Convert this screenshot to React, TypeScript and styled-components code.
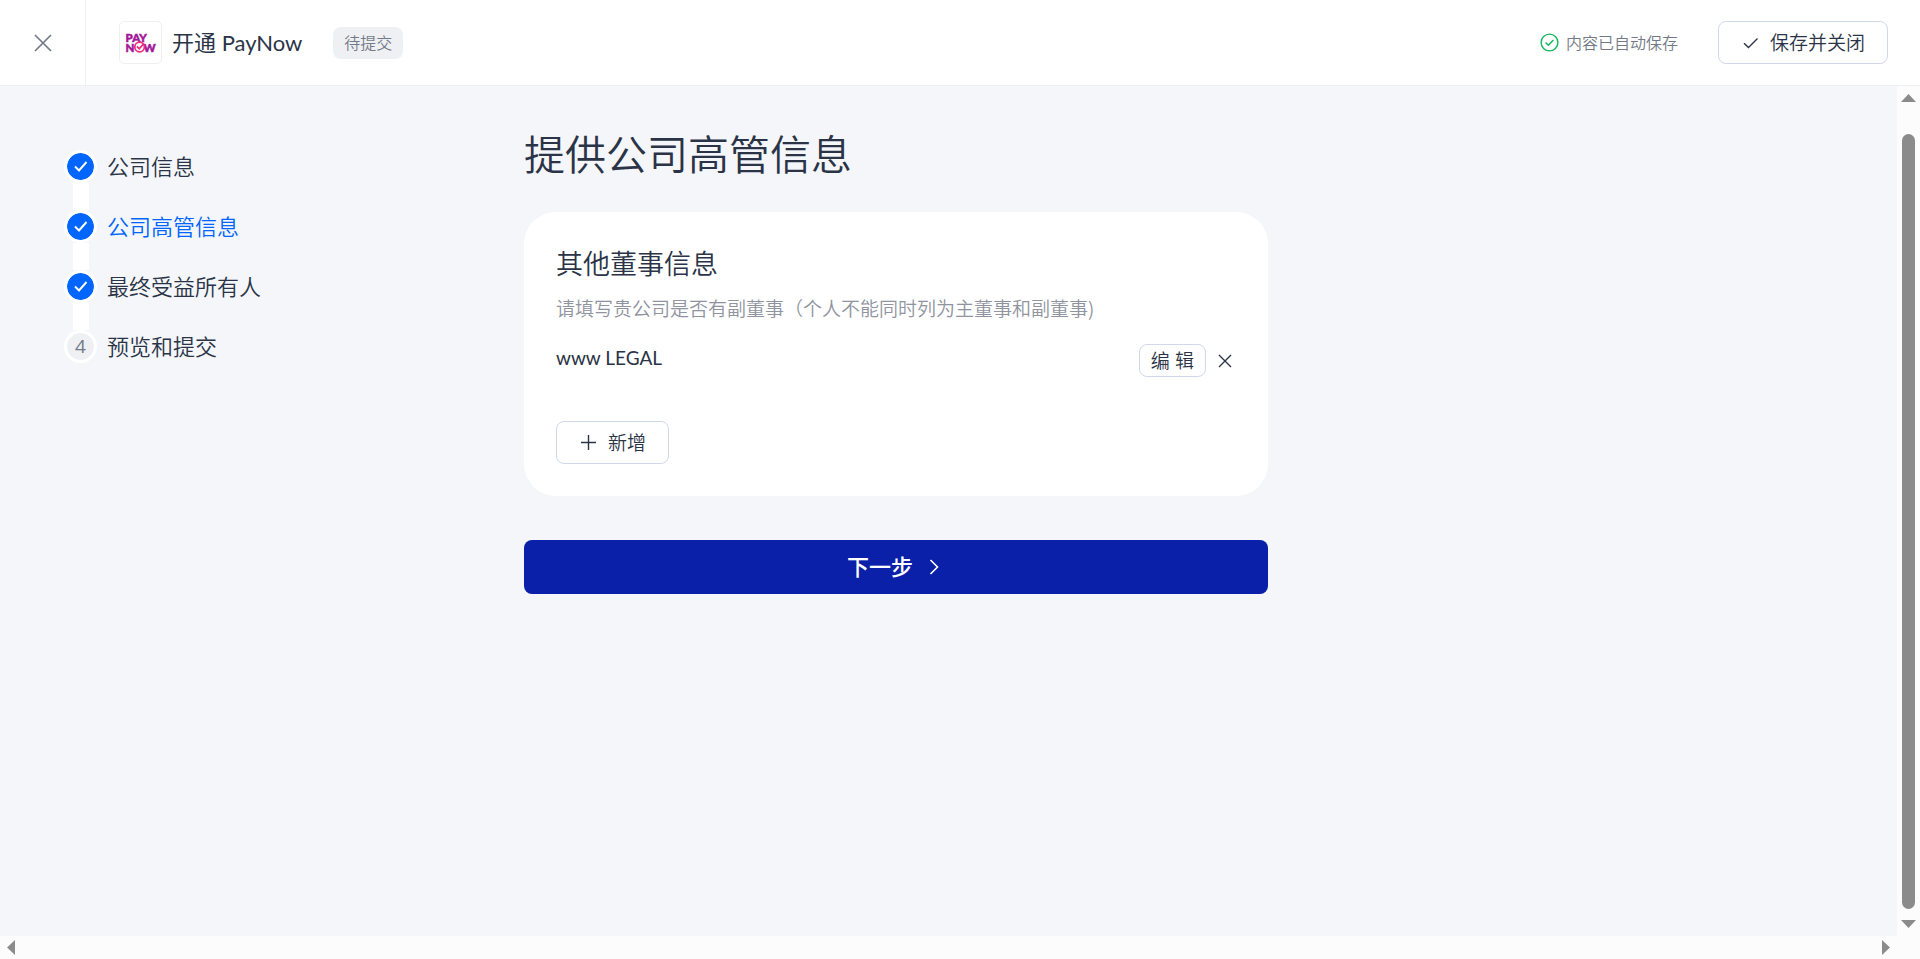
import React from "react";
import styled, { createGlobalStyle } from "styled-components";

const color = {
  ink: "#2a3446",
  muted: "#737a87",
  hint: "#9094a0",
  page: "#f4f6fa",
  line: "#eff0f4",
  border: "#d0d9e9",
  blue: "#0066ff",
  navy: "#0a20a9",
  green: "#12b85c",
  track: "#fcfcfc",
  thumb: "#8b8b8b",
};

const GlobalStyle = createGlobalStyle`
  *, *::before, *::after { box-sizing: border-box; }
  body {
    margin: 0;
    background: ${color.page};
    color: ${color.ink};
    font-family: Lato, "Noto Sans CJK SC", sans-serif;
    font-weight: 350;
  }
  button, a { font: inherit; color: inherit; }
  h1, h2, p, ol { margin: 0; padding: 0; font-weight: inherit; }
`;

const Page = styled.div`
  display: flex;
  flex-direction: column;
  height: 100vh;
`;

const Header = styled.header`
  display: flex;
  align-items: stretch;
  flex: none;
  height: 86px;
  background: #fff;
  border-bottom: 1px solid ${color.line};
`;

const CloseButton = styled.button`
  display: flex;
  align-items: center;
  justify-content: center;
  width: 86px;
  padding: 0;
  border: 0;
  border-right: 1px solid ${color.line};
  background: none;
  color: ${color.muted};
  cursor: pointer;
`;

const HeaderBar = styled.div`
  display: flex;
  flex: 1;
  align-items: center;
  padding: 0 32px 0 33px;
`;

const LogoBox = styled.span`
  display: flex;
  align-items: center;
  justify-content: center;
  width: 43px;
  height: 43px;
  border: 1px solid ${color.line};
  border-radius: 5px;
`;

const ProductName = styled.h1`
  margin-left: 10px;
  font-size: 22px;
  line-height: 32px;
  font-weight: 400;
`;

const Tag = styled.span`
  margin-left: 31px;
  padding: 0 11px;
  border-radius: 8px;
  background: ${color.line};
  color: ${color.muted};
  font-size: 16px;
  line-height: 32px;
`;

const SaveStatus = styled.p`
  display: flex;
  align-items: center;
  gap: 7px;
  margin: 0 40px 0 auto;
  color: ${color.muted};
  font-size: 16px;
  line-height: 24px;

  svg { color: ${color.green}; }
`;

const OutlineButton = styled.button<{ $small?: boolean }>`
  display: inline-flex;
  align-items: center;
  justify-content: center;
  gap: 10px;
  height: ${(p) => (p.$small ? 33 : 43)}px;
  padding: 0 ${(p) => (p.$small ? 11 : 22)}px;
  border: 1px solid ${color.border};
  border-radius: 8px;
  background: #fff;
  color: ${color.ink};
  font-size: 19px;
  line-height: 28px;
  white-space: pre;
  cursor: pointer;
`;

const Viewport = styled.div`
  display: grid;
  flex: 1;
  grid-template-columns: minmax(0, 1fr) 23px;
  grid-template-rows: minmax(0, 1fr) 23px;
  min-height: 0;
  background: ${color.track};
`;

const Content = styled.div`
  display: flex;
  align-items: flex-start;
  overflow: hidden;
  background: ${color.page};
`;

const Sidebar = styled.nav`
  flex: none;
  width: 524px;
  padding: 64px 0 0 64px;
`;

const StepList = styled.ol`
  list-style: none;
`;

const Step = styled.li`
  display: grid;
  grid-template-columns: 33px 1fr;
  column-gap: 10px;
`;

const StepMark = styled.span<{ $done?: boolean }>`
  display: flex;
  align-items: center;
  justify-content: center;
  width: 33px;
  height: 33px;
  border: 3px solid #fff;
  border-radius: 50%;
  background: ${(p) => (p.$done ? color.blue : color.line)};
  background-clip: padding-box;
  color: ${(p) => (p.$done ? "#fff" : color.muted)};
  font-family: "Open Sans", sans-serif;
  font-size: 19px;
  font-weight: 400;
  line-height: 27px;
`;

const StepLink = styled.a<{ $active?: boolean }>`
  color: ${(p) => (p.$active ? color.blue : color.ink)};
  font-size: 22px;
  line-height: 33px;
  text-decoration: none;
`;

const Connector = styled.span`
  justify-self: center;
  width: 16px;
  height: 27px;
  background: #fff;
`;

const Main = styled.main`
  flex: 0 1 744px;
  padding-top: 37px;
`;

const PageTitle = styled.h2`
  font-size: 41px;
  line-height: 64px;
`;

const Card = styled.section`
  margin-top: 25px;
  padding: 32px;
  border-radius: 32px;
  background: #fff;
`;

const CardTitle = styled.h2`
  font-size: 27px;
  line-height: 40px;
`;

const CardHint = styled.p`
  margin-top: 10px;
  color: ${color.hint};
  font-family: "Noto Sans CJK SC", sans-serif;
  font-size: 19px;
  line-height: 28px;
`;

const DirectorRow = styled.div`
  display: flex;
  align-items: center;
  gap: 8px;
  margin: 22px 0 44px;
`;

const DirectorName = styled.span`
  flex: 1;
  align-self: flex-start;
  font-weight: 400;
  font-size: 19px;
  line-height: 28px;
`;

const IconButton = styled.button`
  display: flex;
  align-items: center;
  justify-content: center;
  width: 22px;
  height: 22px;
  padding: 0;
  border: 0;
  background: none;
  cursor: pointer;
`;

const NextButton = styled.button`
  display: flex;
  align-items: center;
  justify-content: center;
  gap: 10px;
  width: 100%;
  height: 54px;
  margin-top: 44px;
  border: 0;
  border-radius: 8px;
  background: ${color.navy};
  color: #fff;
  font-size: 22px;
  font-weight: 500;
  line-height: 32px;
  cursor: pointer;
`;

const VerticalBar = styled.div`
  display: flex;
  flex-direction: column;
  align-items: center;
  padding: 8px 0;
`;

const Thumb = styled.span`
  flex: 1;
  width: 13px;
  margin: 32px 0 11px;
  border-radius: 7px;
  background: ${color.thumb};
`;

const HorizontalBar = styled.div`
  display: flex;
  align-items: center;
  justify-content: space-between;
  padding: 0 7px;
`;

type ArrowDirection = "up" | "down" | "left" | "right";

const arrowPoints: Record<ArrowDirection, string> = {
  up: "0,8 15,8 7.5,0",
  down: "0,0 15,0 7.5,8",
  left: "8,0 8,15 0,7.5",
  right: "0,0 0,15 8,7.5",
};

function ScrollArrow({ to }: { to: ArrowDirection }) {
  const vertical = to === "up" || to === "down";
  return (
    <svg width={vertical ? 15 : 8} height={vertical ? 8 : 15} aria-hidden="true">
      <polygon points={arrowPoints[to]} fill={color.thumb} />
    </svg>
  );
}

function LineIcon({ d, size, stroke = 1.4 }: { d: string; size: number; stroke?: number }) {
  return (
    <svg
      width={size}
      height={size}
      viewBox={`0 0 ${size} ${size}`}
      fill="none"
      stroke="currentColor"
      strokeWidth={stroke}
      aria-hidden="true"
    >
      <path d={d} />
    </svg>
  );
}

function PayNowLogo() {
  return (
    <svg width="35" height="32" viewBox="-2 -6 35 32" role="img" aria-label="PayNow">
      <g fill="#a3169a" stroke="#a3169a" strokeWidth="0.5" fontFamily="Lato, sans-serif" fontWeight="900" fontSize="11.5">
        <text x="0.5" y="9">PAY</text>
        <text x="0.5" y="18.5">N</text>
        <text x="18.5" y="18.5">W</text>
      </g>
      <circle cx="14.6" cy="14" r="4.8" fill="#fff" stroke="#ee2a7b" strokeWidth="1.7" />
      <path d="M12 13.4l2.2 2.4 4.6-5.2" fill="none" stroke="#ee2a7b" strokeWidth="1.7" />
    </svg>
  );
}

const steps = [
  { label: "公司信息", done: true },
  { label: "公司高管信息", done: true, active: true },
  { label: "最终受益所有人", done: true },
  { label: "预览和提交" },
];

export default function App() {
  return (
    <Page>
      <GlobalStyle />
      <Header>
        <CloseButton type="button" aria-label="关闭">
          <LineIcon size={18} d="M1 1l16 16M17 1L1 17" stroke={1.7} />
        </CloseButton>
        <HeaderBar>
          <LogoBox>
            <PayNowLogo />
          </LogoBox>
          <ProductName>开通 PayNow</ProductName>
          <Tag>待提交</Tag>
          <SaveStatus>
            <LineIcon size={19} d="M9.5 1.1a8.4 8.4 0 1 0 0 16.8a8.4 8.4 0 1 0 0-16.8zM5.6 9.6l2.8 2.7 5-5.4" />
            内容已自动保存
          </SaveStatus>
          <OutlineButton type="button">
            <LineIcon size={19} d="M3 10.2l4.5 4.4 9-9" />
            保存并关闭
          </OutlineButton>
        </HeaderBar>
      </Header>
      <Viewport>
        <Content>
          <Sidebar>
            <StepList>
              {steps.map((step, i) => (
                <Step key={step.label}>
                  <StepMark $done={step.done}>
                    {step.done ? <LineIcon size={15} d="M2 7.5l4 4 7.5-8.5" stroke={1.9} /> : i + 1}
                  </StepMark>
                  <StepLink href="#" $active={step.active}>
                    {step.label}
                  </StepLink>
                  {i < steps.length - 1 && <Connector />}
                </Step>
              ))}
            </StepList>
          </Sidebar>
          <Main>
            <PageTitle>提供公司高管信息</PageTitle>
            <Card>
              <CardTitle>其他董事信息</CardTitle>
              <CardHint>请填写贵公司是否有副董事（个人不能同时列为主董事和副董事)</CardHint>
              <DirectorRow>
                <DirectorName>www LEGAL</DirectorName>
                <OutlineButton type="button" $small>
                  编 辑
                </OutlineButton>
                <IconButton type="button" aria-label="删除">
                  <LineIcon size={14} d="M1 1l12 12M13 1L1 13" />
                </IconButton>
              </DirectorRow>
              <OutlineButton type="button">
                <LineIcon size={19} d="M9.5 2v15M2 9.5h15" />
                新增
              </OutlineButton>
            </Card>
            <NextButton type="button">
              下一步
              <LineIcon size={22} d="M7.5 4l7 7-7 7" stroke={1.6} />
            </NextButton>
          </Main>
        </Content>
        <VerticalBar>
          <ScrollArrow to="up" />
          <Thumb />
          <ScrollArrow to="down" />
        </VerticalBar>
        <HorizontalBar>
          <ScrollArrow to="left" />
          <ScrollArrow to="right" />
        </HorizontalBar>
      </Viewport>
    </Page>
  );
}
